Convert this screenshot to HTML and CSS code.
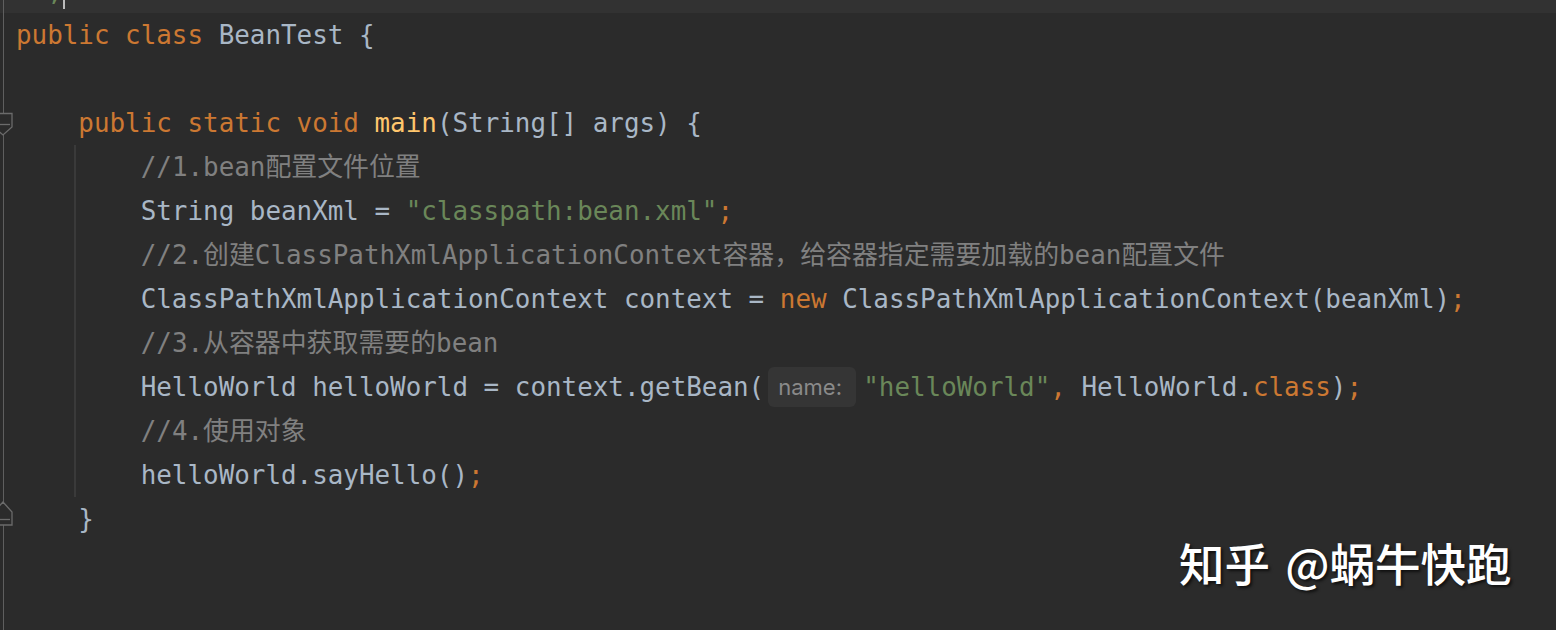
FILE: index.html
```html
<!DOCTYPE html>
<html lang="zh">
<head>
<meta charset="utf-8">
<title>BeanTest.java</title>
<link rel="stylesheet" href="styles.css">
</head>
<body>
<div class="editor">
  <div class="scroller">
    <div class="row cur"><div class="gut"></div><div class="src">  <span class="str">,</span><span class="caret"></span></div></div>
    <div class="row"><div class="gut"></div><div class="src"><span class="kw">public class</span> BeanTest {</div></div>
    <div class="row"><div class="gut"></div><div class="src"></div></div>
    <div class="row"><div class="gut"><svg class="fold" width="16" height="44" viewBox="0 0 16 44"><path d="M-6 12.5H12V26L3 34L-6 26Z"/><path d="M-3 23.5H10"/></svg></div><div class="src">    <span class="kw">public static void</span> <span class="fn">main</span>(String[] args) {</div></div>
    <div class="row g"><div class="gut"></div><div class="src">        <span class="cm">//1.bean配置文件位置</span></div></div>
    <div class="row g"><div class="gut"></div><div class="src">        String beanXml = <span class="str">"classpath:bean.xml"</span><span class="kw">;</span></div></div>
    <div class="row g"><div class="gut"></div><div class="src">        <span class="cm">//2.创建ClassPathXmlApplicationContext容器，给容器指定需要加载的bean配置文件</span></div></div>
    <div class="row g"><div class="gut"></div><div class="src">        ClassPathXmlApplicationContext context = <span class="kw">new</span> ClassPathXmlApplicationContext(beanXml)<span class="kw">;</span></div></div>
    <div class="row g"><div class="gut"></div><div class="src">        <span class="cm">//3.从容器中获取需要的bean</span></div></div>
    <div class="row g"><div class="gut"></div><div class="src">        HelloWorld helloWorld = context.getBean(<span class="hint">name:</span><span class="str">"helloWorld"</span><span class="kw">,</span> HelloWorld.<span class="kw">class</span>)<span class="kw">;</span></div></div>
    <div class="row g"><div class="gut"></div><div class="src">        <span class="cm">//4.使用对象</span></div></div>
    <div class="row g"><div class="gut"></div><div class="src">        helloWorld.sayHello()<span class="kw">;</span></div></div>
    <div class="row"><div class="gut"><svg class="fold" width="16" height="44" viewBox="0 0 16 44"><path d="M3 5L12 15V28H-6V15Z"/><path d="M-3 22.5H10"/></svg></div><div class="src">    }</div></div>
    <div class="row filler"><div class="gut"></div><div class="src"></div></div>
  </div>
  <div class="watermark">知乎 <span class="at">@蜗牛快跑</span></div>
</div>
</body>
</html>
```
FILE: styles.css
```css
html, body {
  margin: 0;
  padding: 0;
  background: #2b2b2b;
}

.editor {
  position: relative;
  width: 1556px;
  height: 630px;
  overflow: hidden;
  background: #2b2b2b;
}

.scroller {
  display: flex;
  flex-direction: column;
  margin-top: -31px;
  height: 661px;
}

.row {
  display: flex;
  height: 44px;
  flex: none;
}

.row.filler {
  flex: 1 1 auto;
  height: auto;
}

.row.cur {
  background: #323232;
}

.gut {
  width: 16px;
  flex: none;
  background: linear-gradient(#5f5f5f, #5f5f5f) no-repeat 3px 0 / 1px 100%;
}

.fold {
  display: block;
  overflow: visible;
}

.fold path {
  fill: #2b2b2b;
  stroke: #6b6b6b;
  stroke-width: 1.3;
}

.src {
  flex: 1 1 auto;
  white-space: pre;
  font-family: "DejaVu Sans Mono", "Noto Sans CJK SC", monospace;
  font-size: 25.9px;
  line-height: 44px;
  color: #a9b7c6;
}

.row.g .src {
  background: linear-gradient(#3a3a3a, #3a3a3a) no-repeat 58px 0 / 2px 100%;
}

.kw { color: #cc7832; }
.fn { color: #ffc66d; }
.str { color: #6a8759; }
.cm { color: #808080; }

.caret {
  display: inline-block;
  width: 2px;
  height: 32px;
  vertical-align: middle;
  background: #bbbbbb;
}

.hint {
  display: inline-block;
  box-sizing: border-box;
  width: 88px;
  height: 40px;
  line-height: 40px;
  margin: 0 7px 0 4px;
  padding-left: 10px;
  vertical-align: middle;
  border-radius: 6px;
  background: #353535;
  color: #8a8a8a;
  font-family: "Inter", "Liberation Sans", sans-serif;
  font-size: 22px;
  position: relative;
  top: -2px;
}

.watermark {
  position: absolute;
  left: 1179px;
  top: 531px;
  font-family: "Noto Sans CJK SC", "Noto Sans", sans-serif;
  font-size: 45.5px;
  font-weight: 500;
  line-height: 62px;
  color: #ffffff;
  text-shadow: 2px 2px 3px rgba(0, 0, 0, 0.65);
  white-space: nowrap;
}

.watermark .at {
  margin-left: 5px;
}
```
